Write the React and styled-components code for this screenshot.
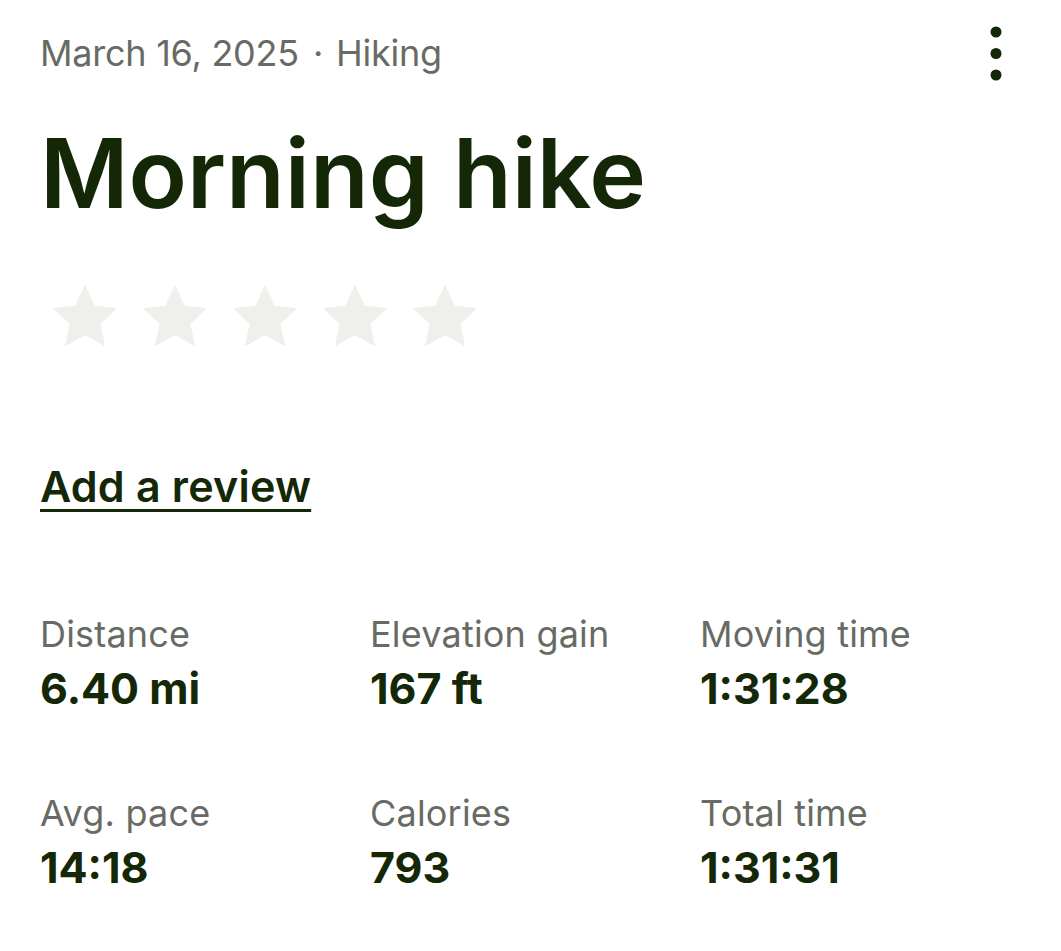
import React from "react";
import styled, { createGlobalStyle } from "styled-components";

const GlobalStyle = createGlobalStyle`
  html, body {
    margin: 0;
    padding: 0;
    background: #ffffff;
    font-family: Inter, "Noto Sans", "Liberation Sans", sans-serif;
  }
`;

const Page = styled.div`
  width: 1061px;
  box-sizing: border-box;
  padding: 24px 40px 40px 40px;
  color: #142808;
`;

const TopRow = styled.div`
  display: flex;
  align-items: flex-start;
  justify-content: space-between;
`;

const Meta = styled.div`
  font-size: 36px;
  line-height: 58px;
  color: #676b63;
  letter-spacing: -0.25px;
`;

const Sep = styled.span`
  margin: 0 13px 0 14px;
`;

const MenuButton = styled.button`
  border: none;
  background: none;
  padding: 0;
  margin: 0 13px 0 0;
  width: 24px;
  height: 60px;
  cursor: pointer;
`;

const Title = styled.h1`
  margin: 34px 0 0 0;
  font-size: 96px;
  font-weight: 600;
  line-height: 110px;
  color: #142808;
`;

const Stars = styled.div`
  display: flex;
  gap: 18px;
  margin: 52px 0 0 9px;
`;

const ReviewLink = styled.a`
  display: inline-block;
  margin-top: 108px;
  font-size: 43px;
  font-weight: 600;
  color: #142808;
  text-decoration: underline;
  text-decoration-thickness: 3px;
  text-underline-offset: 7px;
  letter-spacing: 0.2px;
`;

const StatsGrid = styled.div`
  display: grid;
  grid-template-columns: 330px 330px 330px;
  row-gap: 74px;
  margin-top: 98px;
`;

const Stat = styled.div`
  display: flex;
  flex-direction: column;
`;

const Label = styled.div`
  font-size: 36px;
  line-height: 48px;
  color: #676b63;
  letter-spacing: 0.2px;
`;

const Value = styled.div`
  margin-top: 3px;
  font-size: 43px;
  line-height: 54px;
  font-weight: 700;
  color: #142808;
`;

const Star = () => (
  <svg width="72" height="72" viewBox="0 0 24 24">
    <path
      d="M12 2.2l3 6.6 7.1.8-5.3 4.9 1.5 7.1L12 18l-6.3 3.6 1.5-7.1-5.3-4.9 7.1-.8z"
      fill="#efefec"
      stroke="#efefec"
      strokeWidth="0.6"
      strokeLinejoin="round"
    />
  </svg>
);

const Dots = () => (
  <svg width="24" height="60" viewBox="0 0 24 60">
    <circle cx="12" cy="8" r="5.5" fill="#142808" />
    <circle cx="12" cy="29.5" r="5.5" fill="#142808" />
    <circle cx="12" cy="51" r="5.5" fill="#142808" />
  </svg>
);

const stats = [
  { label: "Distance", value: "6.40 mi" },
  { label: "Elevation gain", value: "167 ft" },
  { label: "Moving time", value: "1:31:28" },
  { label: "Avg. pace", value: "14:18" },
  { label: "Calories", value: "793" },
  { label: "Total time", value: "1:31:31" },
];

export default function App() {
  return (
    <Page>
      <GlobalStyle />
      <TopRow>
        <Meta>
          March 16, 2025<Sep>·</Sep>Hiking
        </Meta>
        <MenuButton aria-label="More options">
          <Dots />
        </MenuButton>
      </TopRow>
      <Title>Morning hike</Title>
      <Stars>
        {[0, 1, 2, 3, 4].map((i) => (
          <Star key={i} />
        ))}
      </Stars>
      <ReviewLink href="#">Add a review</ReviewLink>
      <StatsGrid>
        {stats.map((s) => (
          <Stat key={s.label}>
            <Label>{s.label}</Label>
            <Value>{s.value}</Value>
          </Stat>
        ))}
      </StatsGrid>
    </Page>
  );
}
